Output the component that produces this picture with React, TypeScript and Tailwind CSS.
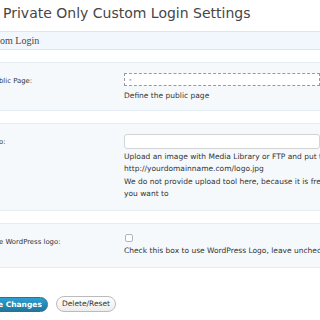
import React from "react";

const Row = ({
  label,
  children,
  className,
}: {
  label: string;
  children: React.ReactNode;
  className: string;
}) => (
  <div className={`flex border-y border-[#e4edf4] bg-[#f5f9fc] ${className}`}>
    <div className="w-[124px] shrink-0 overflow-hidden pt-[13px] text-[6.9px] leading-[10px] text-[#333] whitespace-nowrap">
      <span className="ml-[-1px]">{label}</span>
    </div>
    <div className="flex-1 min-w-0 overflow-hidden">{children}</div>
  </div>
);

const App = () => {
  return (
    <div
      className="w-[320px] h-[320px] overflow-hidden bg-white text-[#333]"
      style={{ fontFamily: '"DejaVu Sans", Verdana, sans-serif' }}
    >
      <h2 className="pl-[3px] pt-[3px] h-[31px] text-[14px] leading-[20px] text-[#464646] whitespace-nowrap">
        Private Only Custom Login Settings
      </h2>

      <div
        className="h-[19px] border-y border-[#dce8f1] bg-[#f1f7fc] text-[10px] leading-[17px] text-[#464646]"
        style={{ fontFamily: '"Liberation Serif", "DejaVu Serif", serif' }}
      >
        om Login
      </div>

      <Row label="blic Page:" className="mt-[12px] h-[49px]">
        <div className="mt-[10px] h-[13px] border border-dashed border-[#9a9a9a] bg-white pl-[4px] text-[7.5px] leading-[11px] whitespace-nowrap">
          -
        </div>
        <p className="mt-[4px] text-[7.5px] leading-[12px] whitespace-nowrap">Define the public page</p>
      </Row>

      <Row label="o:" className="mt-[12px] h-[88px]">
        <div className="mt-[10px] h-[15px] rounded-[3px] border border-[#d4d4d4] bg-white" />
        <div className="mt-[2px] text-[7.5px] leading-[12.4px] whitespace-nowrap">
          <p>Upload an image with Media Library or FTP and put the URL here</p>
          <p>http://yourdomainname.com/logo.jpg</p>
          <p>We do not provide upload tool here, because it is free for you to do what</p>
          <p>you want to</p>
        </div>
      </Row>

      <Row label="e WordPress logo:" className="mt-[12px] h-[45px]">
        <div className="mt-[10px] ml-[1px] h-[8px] w-[8px] rounded-[2px] border border-[#b4b4b4] bg-white" />
        <p className="mt-[3px] text-[7.5px] leading-[12px] whitespace-nowrap">
          Check this box to use WordPress Logo, leave unchecked to use your own
        </p>
      </Row>

      <div className="mt-[28px] flex items-center gap-[8px]">
        <button className="ml-[-3px] h-[15px] w-[51px] rounded-r-full border border-[#21759b] bg-gradient-to-b from-[#2e9fd2] to-[#21759b] text-right pr-[6px] text-[7.5px] font-bold leading-[13px] text-white whitespace-nowrap">
          e Changes
        </button>
        <button className="h-[16px] w-[60px] rounded-full border border-[#bbb] bg-gradient-to-b from-white to-[#ededed] text-[7.5px] leading-[14px] text-[#333] whitespace-nowrap">
          Delete/Reset
        </button>
      </div>
    </div>
  );
};

export default App;
